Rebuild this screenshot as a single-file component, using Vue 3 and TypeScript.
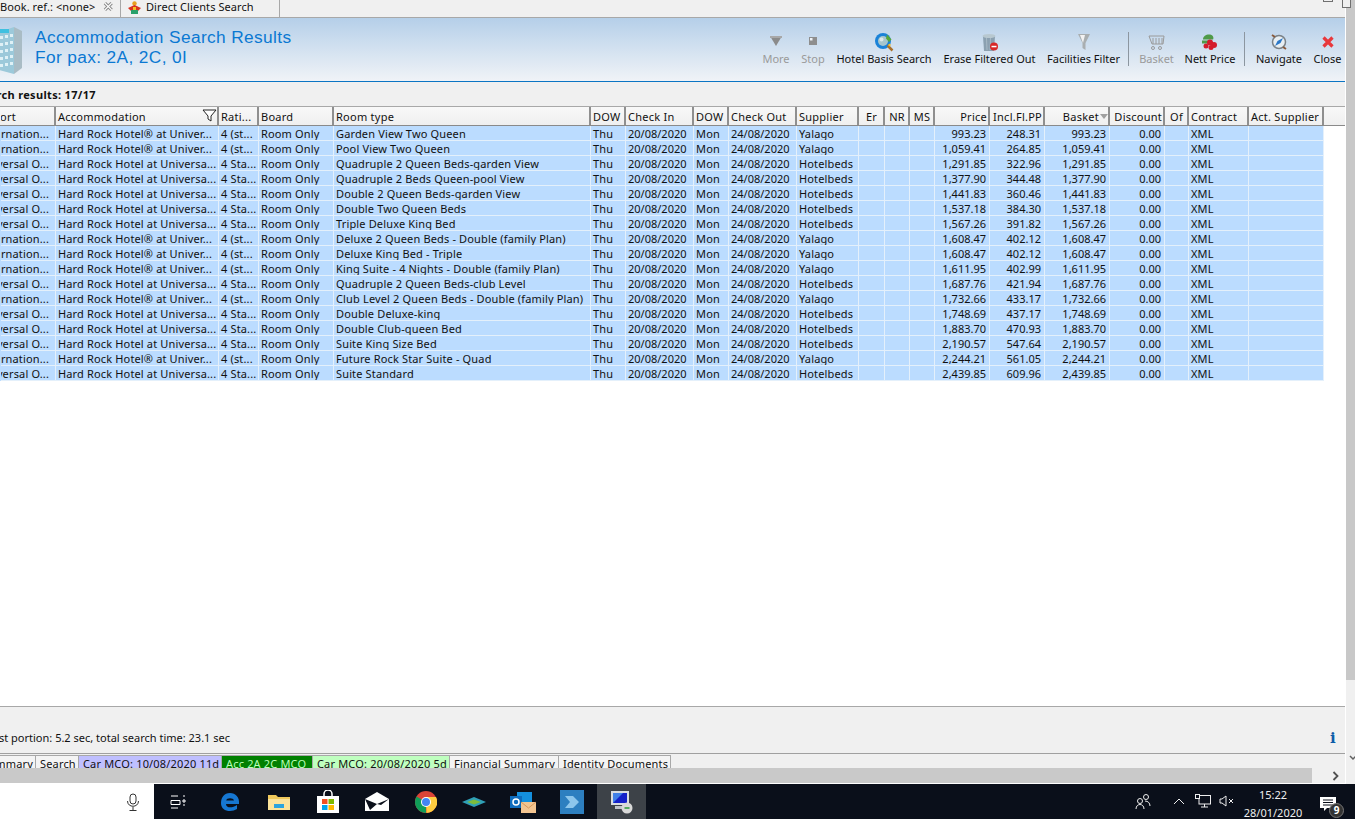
<script setup lang="ts">
interface Col { t: string; w: number; a?: 'r' | 'c'; num?: boolean }
const cols: Col[] = [
  { t: 'Resort', w: 55 }, { t: 'Accommodation', w: 163 }, { t: 'Rati...', w: 40 }, { t: 'Board', w: 75 },
  { t: 'Room type', w: 257 }, { t: 'DOW', w: 35 }, { t: 'Check In', w: 68, num: true }, { t: 'DOW', w: 35 },
  { t: 'Check Out', w: 68, num: true }, { t: 'Supplier', w: 62 }, { t: 'Er', w: 26, a: 'c' }, { t: 'NR', w: 25, a: 'c' },
  { t: 'MS', w: 25, a: 'c' }, { t: 'Price', w: 55, a: 'r', num: true }, { t: 'Incl.Fl.PP', w: 55, a: 'r', num: true }, { t: 'Basket', w: 65, a: 'r', num: true },
  { t: 'Discount', w: 55, a: 'r', num: true }, { t: 'Of', w: 24, a: 'c' }, { t: 'Contract', w: 60 }, { t: 'Act. Supplier', w: 75 },
]
const Y = 'Yalago', H = 'Hotelbeds'
const raw: [string, string, string, string, string][] = [
  ['Garden View Two Queen', Y, '993.23', '248.31', '993.23'],
  ['Pool View Two Queen', Y, '1,059.41', '264.85', '1,059.41'],
  ['Quadruple 2 Queen Beds-garden View', H, '1,291.85', '322.96', '1,291.85'],
  ['Quadruple 2 Beds Queen-pool View', H, '1,377.90', '344.48', '1,377.90'],
  ['Double 2 Queen Beds-garden View', H, '1,441.83', '360.46', '1,441.83'],
  ['Double Two Queen Beds', H, '1,537.18', '384.30', '1,537.18'],
  ['Triple Deluxe King Bed', H, '1,567.26', '391.82', '1,567.26'],
  ['Deluxe 2 Queen Beds - Double (family Plan)', Y, '1,608.47', '402.12', '1,608.47'],
  ['Deluxe King Bed - Triple', Y, '1,608.47', '402.12', '1,608.47'],
  ['King Suite - 4 Nights - Double (family Plan)', Y, '1,611.95', '402.99', '1,611.95'],
  ['Quadruple 2 Queen Beds-club Level', H, '1,687.76', '421.94', '1,687.76'],
  ['Club Level 2 Queen Beds - Double (family Plan)', Y, '1,732.66', '433.17', '1,732.66'],
  ['Double Deluxe-king', H, '1,748.69', '437.17', '1,748.69'],
  ['Double Club-queen Bed', H, '1,883.70', '470.93', '1,883.70'],
  ['Suite King Size Bed', H, '2,190.57', '547.64', '2,190.57'],
  ['Future Rock Star Suite - Quad', Y, '2,244.21', '561.05', '2,244.21'],
  ['Suite Standard', H, '2,439.85', '609.96', '2,439.85'],
]
const rows = raw.map((r) => {
  const y = r[1] === Y
  return [
    y ? 'Internation...' : 'Universal O...',
    y ? 'Hard Rock Hotel® at Univer...' : 'Hard Rock Hotel at Universa...',
    y ? '4 (st...' : '4 Sta...',
    'Room Only', r[0], 'Thu', '20/08/2020', 'Mon', '24/08/2020', r[1], '', '', '',
    r[2], r[3], r[4], '0.00', '', 'XML', '',
  ]
})
const gridCols = cols.map((c) => c.w + 'px').join(' ')
</script>

<template>
  <div class="screen">
    <div class="app">
      <div class="tabs">
        <div class="tab on"><span class="clip">Book. ref.: &lt;none&gt;</span>
          <svg class="x" width="11" height="11" viewBox="0 0 11 11"><path d="M2 2l7 7M9 2l-7 7" stroke="#8a8a8a" stroke-width="3.400"/><path d="M2 2l7 7M9 2l-7 7" stroke="#fff" stroke-width="1.400"/></svg>
        </div>
        <div class="tab two">
          <svg width="15" height="14" viewBox="0 0 15 14"><circle cx="7.500" cy="2.500" r="2.200" fill="#e8a020"/><path d="M1 7l6.500-3 6.500 3-3 3H4z" fill="#d8321e"/><rect x="4" y="9" width="7" height="4" fill="#2aa06a"/><rect x="6" y="6" width="3" height="3" fill="#f4c020"/></svg>
          <span>Direct Clients Search</span>
        </div>
        <div class="winbtns"><i class="mini a"></i><i class="mini b"></i></div>
      </div>

      <div class="banner">
        <svg class="bld" width="24" height="50" viewBox="0 0 24 50">
          <path d="M0 6l15-5v47l-15-4z" fill="#9cc9da"/><path d="M15 1l8 4v37l-8 6z" fill="#a9bcc5"/>
          <g fill="#dff1f6"><rect x="1" y="10" width="3" height="3"/><rect x="6" y="9" width="3" height="3"/><rect x="11" y="8" width="3" height="3"/><rect x="1" y="17" width="3" height="3"/><rect x="6" y="16" width="3" height="3"/><rect x="11" y="15" width="3" height="3"/><rect x="1" y="24" width="3" height="3"/><rect x="6" y="23" width="3" height="3"/><rect x="11" y="22" width="3" height="3"/><rect x="1" y="31" width="3" height="3"/><rect x="6" y="30" width="3" height="3"/><rect x="11" y="29" width="3" height="3"/><rect x="1" y="38" width="3" height="3"/><rect x="6" y="37" width="3" height="3"/><rect x="11" y="36" width="3" height="3"/></g>
          <rect x="0" y="3" width="10" height="4" fill="#3fc0e0"/>
        </svg>
        <div class="title"><div>Accommodation Search Results</div><div>For pax: 2A, 2C, 0I</div></div>
        <div class="toolbar">
          <div class="tool off w-more">
            <svg class="hi" width="14" height="14" viewBox="0 0 14 14"><path d="M1 2h12L7 12z" fill="#8b8b8b"/><path d="M1 2h12v2H1z" fill="#a8a8a8"/></svg><span>More</span>
          </div>
          <div class="tool off w-stop">
            <svg class="hi" width="10" height="10" viewBox="0 0 10 10"><rect x="1" y="1" width="8" height="8" fill="#8e8e8e"/><rect x="2" y="2" width="2.500" height="2.500" fill="#eef2f6"/></svg><span>Stop</span>
          </div>
          <div class="tool w-hotel">
            <svg width="20" height="20" viewBox="0 0 20 20"><circle cx="9" cy="9" r="8" fill="#1a82d8"/><circle cx="9" cy="9" r="5" fill="#a6c6cc"/><circle cx="7.500" cy="7.500" r="2" fill="#dbe8ea"/><path d="M13 2.500l4.500 5-2.500 2.500-3-3.500z" fill="#58a838"/><path d="M13.500 13.500l5 5" stroke="#a8702a" stroke-width="2.500"/><circle cx="15.500" cy="13" r="1.200" fill="#f2c230"/></svg><span>Hotel Basis Search</span>
          </div>
          <div class="tool w-erase">
            <svg width="18" height="20" viewBox="0 0 18 20"><path d="M2 4h12l-1 15H3z" fill="#8ba0b0"/><path d="M5 6h1l.5 12h-1zM9 6h1l-.5 12h-1z" fill="#a8bac6"/><ellipse cx="8" cy="4" rx="6.500" ry="2" fill="#b8c8d0"/><circle cx="13" cy="14.500" r="4" fill="#d82828"/><rect x="10.500" y="13.800" width="5" height="1.500" fill="#fff"/></svg><span>Erase Filtered Out</span>
          </div>
          <div class="tool w-fac">
            <svg width="14" height="20" viewBox="0 0 14 20"><path d="M1 2h12L8.500 11v7l-3-2v-5z" fill="#a9aeb0"/><path d="M3 3h5l-2 8z" fill="#f2f2f2"/></svg><span>Facilities Filter</span>
          </div>
          <i class="sep wide"></i>
          <div class="tool off w-basket">
            <svg width="18" height="18" viewBox="0 0 18 18" fill="none" stroke="#9a9a9a"><path d="M1 3h15l-1 8H4zM5 5v6M8 5v6M11 5v6M14 5v6"/><circle cx="5" cy="15" r="1.500"/><circle cx="12" cy="15" r="1.500"/></svg><span>Basket</span>
          </div>
          <div class="tool w-nett">
            <svg width="18" height="17" viewBox="0 0 18 17"><path d="M2 6c0-4 4-5.500 7-5 3 .5 4 3 3 5z" fill="#4f9a48"/><rect x="1" y="7" width="6" height="3" fill="#4f9a48"/><circle cx="9" cy="9" r="3" fill="#d41c2c"/><circle cx="13" cy="11.500" r="3" fill="#d41c2c"/><circle cx="5" cy="12.500" r="2.500" fill="#d41c2c"/><circle cx="10" cy="14" r="2.500" fill="#d41c2c"/></svg><span>Nett Price</span>
          </div>
          <i class="sep"></i>
          <div class="tool w-nav">
            <svg width="18" height="18" viewBox="0 0 18 18"><circle cx="9" cy="9" r="6.500" fill="#e8eef2" stroke="#7a8288" stroke-width="1.500"/><path d="M13 5L7.500 8 5 13l5.500-3z" fill="#2a78c8"/><path d="M2 2l3 2M16 16l-3-2" stroke="#8a5a3a" stroke-width="2"/></svg><span>Navigate</span>
          </div>
          <div class="tool w-close">
            <svg width="14" height="14" viewBox="0 0 14 14"><path d="M2.500 2.500l9 9M11.500 2.500l-9 9" stroke="#e8383c" stroke-width="3.200"/></svg><span>Close</span>
          </div>
        </div>
      </div>

      <div class="count"><span class="clipb">Search results: 17/17</span></div>

      <div class="gridwrap">
        <div class="row head" :style="{ gridTemplateColumns: gridCols }">
          <div v-for="(c, i) in cols" :key="i" class="hc" :class="[c.a, { first: i === 0 }]">
            <span>{{ c.t }}</span>
            <svg v-if="i === 1" class="funnel" width="15" height="13" viewBox="0 0 15 13"><path d="M1 1h13L9 7v5L6 10V7z" fill="#fff" stroke="#222"/></svg>
            <svg v-if="c.t === 'Basket'" class="sort" width="8" height="5" viewBox="0 0 8 5"><path d="M0 0h8L4 5z" fill="#a0a0a0"/></svg>
          </div>
        </div>
        <div v-for="(r, ri) in rows" :key="ri" class="row body" :style="{ gridTemplateColumns: gridCols }">
          <div v-for="(c, ci) in r" :key="ci" class="bc" :class="[cols[ci].a, { first: ci === 0, num: cols[ci].num }]">{{ c }}</div>
        </div>
      </div>

      <div class="status">
        <span class="clipc">Last portion: 5.2 sec, total search time: 23.1 sec</span>
        <span class="info">i</span>
      </div>

      <div class="doctabs">
        <div class="dt first"><span>Summary</span></div>
        <div class="dt d-search">Search</div>
        <div class="dt d-car1">Car MCO: 10/08/2020 11d</div>
        <div class="dt d-acc">Acc 2A 2C MCO</div>
        <div class="dt d-car2">Car MCO: 20/08/2020 5d</div>
        <div class="dt d-fin">Financial Summary</div>
        <div class="dt d-id">Identity Documents</div>
      </div>
      <div class="hscroll"><svg width="8" height="10" viewBox="0 0 8 10"><path d="M1.500 1l4 4-4 4" fill="none" stroke="#505050" stroke-width="1.800"/></svg></div>
    </div>

    <div class="rail"><svg class="railchev" width="8" height="6" viewBox="0 0 8 6"><path d="M1 1l3 3 3-3" fill="none" stroke="#606060" stroke-width="1.500"/></svg></div>

    <div class="taskbar">
      <div class="searchbox">
        <svg width="14" height="18" viewBox="0 0 14 18" fill="none" stroke="#333"><rect x="4" y="1" width="6" height="10" rx="3"/><path d="M1.500 8c0 7 11 7 11 0M7 14v3M3.500 17.500h7"/></svg>
      </div>
      <div class="tb-icons">
        <div class="ti tv"><svg width="16" height="14" viewBox="0 0 16 14" fill="none" stroke="#fff"><path d="M1 1h7M1 13h7M1 5.500h9v4H1zM13 1h2M13 5h2v2h-2zM13 10h2"/></svg></div>
        <div class="ti"><svg width="20" height="20" viewBox="0 0 20 20"><path d="M10 1C4 1 1 5.500 1 11c0 5.500 4 8 9 8 2.500 0 5-.7 7-2v-4c-5 3.500-11 3-11-1h13c.8-7-3.500-11-9-11zM6.200 8.500C6.500 5.500 13.500 5.500 14 8.500z" fill="#1677d2"/></svg></div>
        <div class="ti"><svg width="22" height="18" viewBox="0 0 22 18"><path d="M0 2h8l2 2h12v13H0z" fill="#f0c95c"/><path d="M0 6h22v11H0z" fill="#fbe39a"/><path d="M6 11h10v4H6z" fill="#2ba4dd"/></svg></div>
        <div class="ti"><svg width="24" height="24" viewBox="0 0 24 24"><path d="M8 7V4a4 4 0 018 0v3" fill="none" stroke="#fff" stroke-width="1.500"/><rect x="1" y="6" width="22" height="17" fill="#fff"/><rect x="6" y="9" width="5.500" height="5" fill="#f25022"/><rect x="12.500" y="9" width="5.500" height="5" fill="#7fba00"/><rect x="6" y="15" width="5.500" height="5" fill="#00a4ef"/><rect x="12.500" y="15" width="5.500" height="5" fill="#ffb900"/></svg></div>
        <div class="ti"><svg width="24" height="20" viewBox="0 0 24 20"><path d="M0 7L12 0l12 7v12H0z" fill="#fff"/><path d="M0 7l12 5 12-5-8 6-4-1-7 6z" fill="#0a0f1a"/></svg></div>
        <div class="ti"><svg width="22" height="22" viewBox="0 0 22 22"><circle cx="11" cy="11" r="11" fill="#db4437"/><path d="M11 11L1.500 5.500A11 11 0 0011 22z" fill="#0f9d58"/><path d="M11 6h10a11 11 0 01-9.500 16z" fill="#ffcd40"/><circle cx="11" cy="11" r="5" fill="#fff"/><circle cx="11" cy="11" r="4" fill="#4285f4"/></svg></div>
        <div class="ti"><svg width="24" height="12" viewBox="0 0 24 12"><path d="M0 6l12-5 12 5-12 5z" fill="#2f9fb8"/><path d="M5 6l7-2.500L19 6l-7 2.500z" fill="#7dbb3c"/></svg></div>
        <div class="ti"><svg width="26" height="22" viewBox="0 0 26 22"><rect x="7" y="1" width="15" height="14" fill="#1490df"/><rect x="0" y="5" width="12" height="12" fill="#0f6cbd"/><circle cx="6" cy="11" r="3" fill="none" stroke="#fff" stroke-width="1.500"/><rect x="11" y="11" width="15" height="11" fill="#f3c591"/><path d="M11 11l7.500 6 7.500-6" fill="none" stroke="#d8975a"/></svg></div>
        <div class="ti"><svg width="24" height="24" viewBox="0 0 24 24"><rect width="24" height="24" fill="#2d7fc0"/><path d="M5 6h8l6 6-6 6H5l5-6z" fill="#8dc6ec"/></svg></div>
        <div class="ti act"><svg width="24" height="24" viewBox="0 0 24 24"><rect x="2" y="1" width="18" height="14" fill="#d8dce0"/><rect x="4" y="3" width="14" height="10" fill="#1420c8"/><path d="M4 3h10L4 13z" fill="#4080e8"/><path d="M6 16h11v3H6z" fill="#bfc3c8"/><circle cx="18" cy="18" r="5.500" fill="#d8d8d8"/><path d="M15.500 18h5" stroke="#2a9a3a" stroke-width="1.500"/></svg></div>
      </div>
      <div class="tray">
        <svg width="16" height="17" viewBox="0 0 16 17" fill="none" stroke="#eee"><circle cx="11" cy="4" r="2.500"/><circle cx="5" cy="8" r="2.500"/><path d="M1 16c0-6 8-6 8 0M10 8c3 0 5 2 5 5"/></svg>
        <svg class="caret" width="12" height="7" viewBox="0 0 12 7" fill="none" stroke="#eee"><path d="M1 6l5-5 5 5"/></svg>
        <svg class="net" width="16" height="14" viewBox="0 0 16 14" fill="none" stroke="#eee"><rect x="4" y="1.500" width="11.500" height="8.500"/><path d="M6 13h7M9.500 10v3"/><rect x=".5" y=".5" width="4" height="4" fill="#0a0f1a"/></svg>
        <svg class="vol" width="15" height="12" viewBox="0 0 15 12" fill="none" stroke="#eee"><path d="M1 4h2l4-3v10L3 8H1zM10 4l4 4M14 4l-4 4"/></svg>
        <div class="clock"><div>15:22</div><div>28/01/2020</div></div>
        <div class="notif">
          <svg width="16" height="14" viewBox="0 0 16 14"><path d="M0 0h16v11h-9l-3 3v-3H0z" fill="#fff"/><path d="M3 3h10M3 5.500h10M3 8h10" stroke="#0a0f1a"/></svg>
          <span class="badge">9</span>
        </div>
      </div>
    </div>
  </div>
</template>

<style>
html, body { margin: 0; padding: 0; overflow: hidden; background: #fff; }
</style>

<style scoped>
.screen { width: 1355px; height: 819px; display: grid; grid-template-columns: 1345px 10px; grid-template-rows: 784px 35px; font-family: "Noto Sans", "Open Sans", sans-serif; font-size: 11px; color: #111; overflow: hidden; }
.app { display: flex; flex-direction: column; min-width: 0; background: #f0f0f0; }
.rail { background: linear-gradient(180deg, #c8c8c8 680px, #f0f0f0 680px); border-left: 1px solid #fff; position: relative; }
.railchev { position: absolute; left: 3px; top: 755px; }

.tabs { height: 18px; display: flex; position: relative; background: #f0f0f0; border-bottom: 1px solid #a8a8a8; box-sizing: border-box; flex: none; }
.tab { height: 17px; display: flex; align-items: center; box-sizing: border-box; white-space: nowrap; line-height: 15px; overflow: hidden; padding-bottom: 5px; letter-spacing: .08px; }
.tab.on { width: 121px; justify-content: flex-end; gap: 8px; padding-right: 6px; border-right: 1px solid #a8a8a8; background: #f0f0f0; }
.tab.two { width: 159px; padding-left: 6px; gap: 4px; border-right: 1px solid #a8a8a8; background: #f0f0f0; }
.tab.two svg { margin-top: 3px; }
.winbtns { position: absolute; right: -10px; top: 0; z-index: 2; }
.mini { position: absolute; display: block; background: #f0f0f0; border: 1px solid #707070; box-sizing: border-box; }
.mini.a { right: 22px; top: -1px; width: 10px; height: 3px; }
.mini.b { right: 4px; top: -1px; width: 9px; height: 9px; }

.banner { height: 64px; flex: none; display: flex; align-items: center; background: linear-gradient(180deg, #b5cfe9 0%, #cadcee 35%, #f0f3f7 100%); box-sizing: border-box; border-bottom: 1px solid #0c75c4; }
.bld { margin: 3px 0 0 -1px; flex: none; }
.title { margin: -6px 0 0 12px; font: 17.3px/20px "Liberation Sans", Arial, sans-serif; color: #0a78d2; letter-spacing: .38px; white-space: nowrap; }
.toolbar { margin-left: auto; display: flex; height: 100%; align-items: flex-start; }
.tool { height: 100%; display: flex; flex-direction: column; align-items: center; justify-content: flex-end; padding-bottom: 15px; box-sizing: border-box; white-space: nowrap; position: relative; flex: none; }
.tool svg { position: absolute; left: 50%; top: 24px; transform: translate(-50%, -50%); }
.tool svg.hi { top: 23px; }
.tool span { line-height: 15px; }
.tool.off { color: #9a9a9a; }
.w-more { width: 38px; }
.w-stop { width: 36px; }
.w-hotel { width: 106px; }
.w-erase { width: 105px; }
.w-fac { width: 83px; }
.w-basket { width: 45px; }
.w-nett { width: 62px; }
.w-nav { width: 62px; }
.w-close { width: 35px; }
.sep { display: block; width: 1px; height: 34px; margin: 14px 3px 0 3px; background: #8c96a0; flex: none; }
.sep.wide { margin-right: 5px; }

.count { height: 24px; flex: none; line-height: 25px; font-weight: 700; position: relative; overflow: hidden; box-sizing: border-box; }
.clipb { position: absolute; right: calc(100% - 96px); white-space: nowrap; font-size: 11px; letter-spacing: .33px; }

.gridwrap { height: 601px; flex: none; background: #fff; border-top: 1px solid #a8a8a8; border-bottom: 1px solid #a8a8a8; box-sizing: border-box; overflow: hidden; }
.row { display: grid; white-space: nowrap; }
.head { height: 19px; padding-left: 1px; background: linear-gradient(#f8f8f8, #efefef); border-bottom: 1px solid #8a8a8a; box-sizing: border-box; width: 1345px; }
.hc { display: flex; align-items: center; padding: 0 1px 0 2px; box-sizing: border-box; overflow: hidden; position: relative; border-right: 2px solid #8f8f8f; line-height: 17px; letter-spacing: .25px; }
.hc.first { justify-content: flex-end; padding-right: 38px; }
.hc.r { justify-content: flex-end; }
.hc.c { justify-content: center; }
.funnel { position: absolute; right: 0; top: 2px; }
.sort { margin-left: 1px; margin-right: -1px; }
.body { height: 15px; line-height: 14px; width: 1324px; padding-left: 1px; background: #bbdcff; box-sizing: border-box; }
.bc { padding: 1px 3px 0 2px; height: 15px; overflow: hidden; box-sizing: border-box; border-right: 1px solid #e4f0fb; border-bottom: 1px solid #e4f0fb; display: flex; letter-spacing: .15px; }
.bc.num { letter-spacing: 0; }
.bc.first { justify-content: flex-end; padding-right: 6px; }
.bc.r { justify-content: flex-end; padding-right: 3px; }
.bc.c { justify-content: center; }

.status { height: 47px; flex: none; box-sizing: border-box; position: relative; border-bottom: 1px solid #a0a0a0; overflow: hidden; }
.clipc { position: absolute; right: calc(100% - 230px); top: 23px; line-height: 16px; white-space: nowrap; }
.info { position: absolute; left: 1330px; top: 22px; font: 700 15px/18px "DejaVu Serif", serif; color: #0d5ca8; }

.doctabs { height: 14px; flex: none; display: flex; overflow: hidden; padding-top: 1px; box-sizing: border-box; background: #f0f0f0; }
.dt { flex: none; height: 17px; box-sizing: border-box; border: 1px solid #a8a8a8; border-left: 0; padding: 0 2px 0 4px; line-height: 16px; white-space: nowrap; background: #f4f4f4; letter-spacing: .17px; }
.dt.first { width: 36px; display: flex; justify-content: flex-end; overflow: hidden; }
.d-search { width: 43px; }
.d-car1 { width: 143px; background: #bfbfff; }
.d-acc { width: 91px; background: #008000; color: #b8ffb8; }
.d-car2 { width: 137px; background: #bfffbf; }
.d-fin { width: 109px; }
.d-id { width: 112px; }
.hscroll { height: 15px; flex: none; background: linear-gradient(90deg, #c9c9c9 1312px, #f0f0f0 1312px); position: relative; border-bottom: 1px solid #fff; box-sizing: content-box; }
.hscroll svg { position: absolute; right: 5px; top: 3px; }

.taskbar { grid-column: 1 / 3; display: flex; background: #0a0f1a; height: 35px; color: #eee; position: relative; }
.searchbox { width: 154px; background: #fff; display: flex; justify-content: flex-end; align-items: center; padding-right: 14px; box-sizing: border-box; flex: none; }
.tb-icons { display: flex; flex: none; }
.ti { width: 48.900px; height: 35px; display: flex; align-items: center; justify-content: center; flex: none; box-sizing: border-box; }
.ti.tv { width: 51.500px; padding-right: 3px; }
.ti.act { background: #3d4248; }
.tray { margin-left: auto; display: flex; align-items: center; position: relative; width: 228px; height: 35px; flex: none; }
.tray svg { position: absolute; }
.tray > svg:first-child { left: 8px; top: 9px; }
.caret { left: 46px; top: 14px; }
.net { left: 68px; top: 10px; }
.vol { left: 92px; top: 11px; }
.clock { position: absolute; left: 112px; width: 68px; text-align: center; font-size: 11px; line-height: 18px; top: 2px; color: #eee; }
.notif { position: absolute; left: 193px; top: 13px; width: 26px; height: 22px; }
.notif svg { left: 0; top: 0; }
.badge { position: absolute; left: 9px; top: 6px; width: 15px; height: 15px; border-radius: 50%; background: #333; border: 1px solid #777; box-sizing: border-box; font-size: 10px; line-height: 13px; text-align: center; color: #fff; font-weight: 700; }
</style>
